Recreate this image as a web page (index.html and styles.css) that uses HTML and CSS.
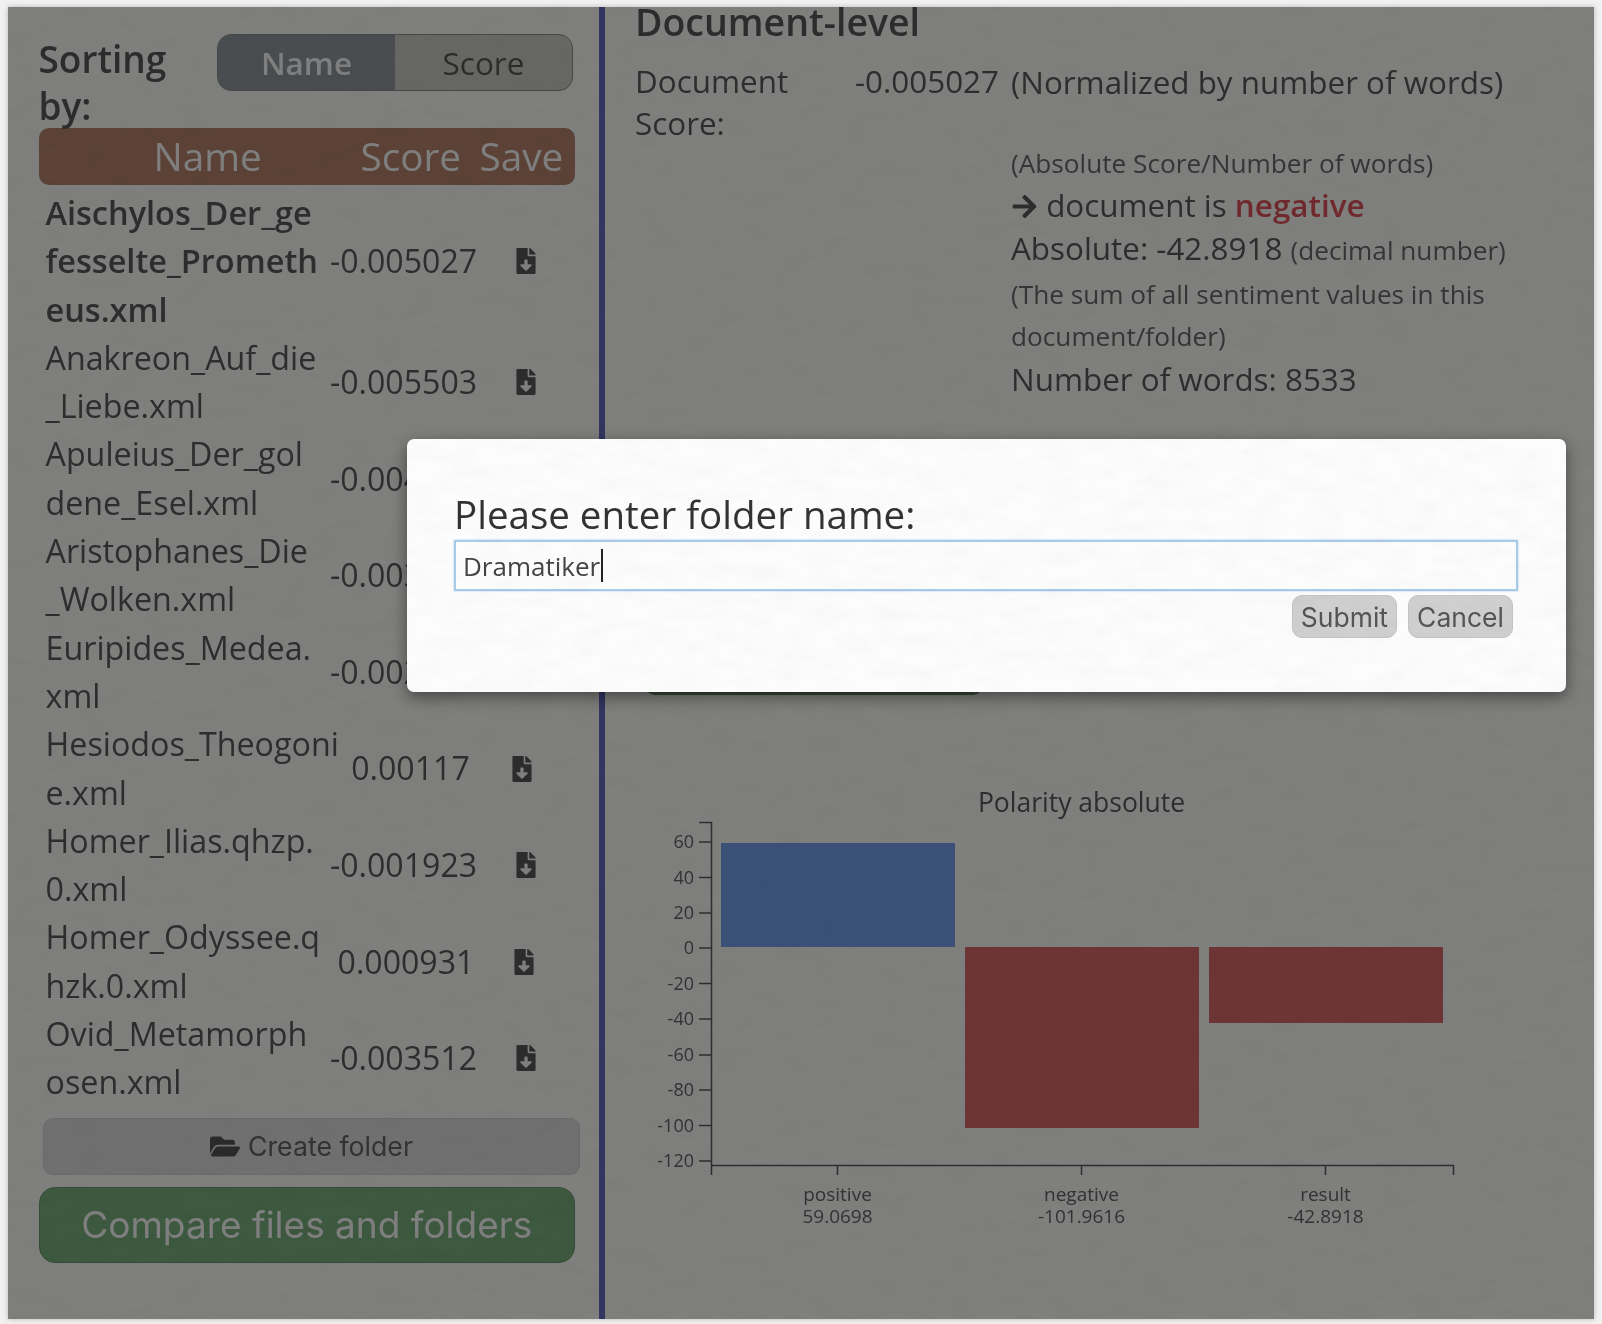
FILE: index.html
```html
<!DOCTYPE html>
<html lang="en">
<head>
<meta charset="utf-8">
<title>Sentiment analysis</title>
<link rel="stylesheet" href="styles.css">
</head>
<body>
<div class="window">
  <div class="app">
    <aside class="sidebar">
      <div class="sorting">
        <div class="sorting-label">Sorting by:</div>
        <div class="toggle">
          <span class="toggle-item toggle-on">Name</span>
          <span class="toggle-item">Score</span>
        </div>
      </div>
      <div class="list-head">
        <span class="head-name">Name</span>
        <span class="head-score">Score</span>
        <span class="head-save">Save</span>
      </div>
      <div class="row row-selected">
        <div class="name">Aischylos_Der_ge<br>fesselte_Prometh<br>eus.xml</div>
        <div class="score">-0.005027</div>
        <div class="save"><svg class="file-icon" viewBox="0 0 384 512"><use href="#file-dl"/></svg></div>
      </div>
      <div class="row">
        <div class="name">Anakreon_Auf_die<br>_Liebe.xml</div>
        <div class="score">-0.005503</div>
        <div class="save"><svg class="file-icon" viewBox="0 0 384 512"><use href="#file-dl"/></svg></div>
      </div>
      <div class="row">
        <div class="name">Apuleius_Der_gol<br>dene_Esel.xml</div>
        <div class="score">-0.004316</div>
        <div class="save"></div>
      </div>
      <div class="row">
        <div class="name">Aristophanes_Die<br>_Wolken.xml</div>
        <div class="score">-0.003875</div>
        <div class="save"></div>
      </div>
      <div class="row">
        <div class="name">Euripides_Medea.<br>xml</div>
        <div class="score">-0.002764</div>
        <div class="save"></div>
      </div>
      <div class="row row-wide">
        <div class="name">Hesiodos_Theogoni<br>e.xml</div>
        <div class="score">0.00117</div>
        <div class="save"><svg class="file-icon" viewBox="0 0 384 512"><use href="#file-dl"/></svg></div>
      </div>
      <div class="row">
        <div class="name">Homer_Ilias.qhzp.<br>0.xml</div>
        <div class="score">-0.001923</div>
        <div class="save"><svg class="file-icon" viewBox="0 0 384 512"><use href="#file-dl"/></svg></div>
      </div>
      <div class="row row-mid">
        <div class="name">Homer_Odyssee.q<br>hzk.0.xml</div>
        <div class="score">0.000931</div>
        <div class="save"><svg class="file-icon" viewBox="0 0 384 512"><use href="#file-dl"/></svg></div>
      </div>
      <div class="row">
        <div class="name">Ovid_Metamorph<br>osen.xml</div>
        <div class="score">-0.003512</div>
        <div class="save"><svg class="file-icon" viewBox="0 0 384 512"><use href="#file-dl"/></svg></div>
      </div>
      <button class="create-folder">
        <svg class="folder-icon" viewBox="0 0 576 512"><path d="M572.694 292.093L500.27 416.248A63.997 63.997 0 0 1 444.989 448H45.025c-18.523 0-30.064-20.093-20.731-36.093l72.424-124.155A64 64 0 0 1 152 256h399.964c18.523 0 30.064 20.093 20.73 36.093zM152 224h328v-48c0-26.51-21.49-48-48-48H272l-64-64H48C21.49 64 0 85.49 0 112v278.046l69.077-118.418C86.214 242.25 117.989 224 152 224z"/></svg>
        Create folder
      </button>
      <button class="compare">Compare files and folders</button>
    </aside>

    <main class="content">
      <h2 class="doc-title">Document-level</h2>
      <div class="score-grid">
        <div class="score-label">Document Score:</div>
        <div class="score-value">-0.005027</div>
        <div class="score-text">
          <div class="line-main">(Normalized by number of words)</div>
          <div class="line-note line-first">(Absolute Score/Number of words)</div>
          <div class="line-main"><svg class="arrow-icon" viewBox="0 0 448 512"><path d="M190.5 66.9l22.2-22.2c9.4-9.4 24.6-9.4 33.9 0L441 239c9.4 9.4 9.4 24.6 0 33.9L246.6 467.3c-9.4 9.4-24.6 9.4-33.9 0l-22.2-22.2c-9.5-9.5-9.3-25 .4-34.3L311.4 296H24c-13.3 0-24-10.7-24-24v-32c0-13.3 10.7-24 24-24h287.4L190.9 101.2c-9.8-9.3-10-24.8-.4-34.3z"/></svg> document is <span class="negative">negative</span></div>
          <div class="line-main">Absolute: -42.8918 <span class="small">(decimal number)</span></div>
          <div class="line-note">(The sum of all sentiment values in this</div>
          <div class="line-note">document/folder)</div>
          <div class="line-main">Number of words: 8533</div>
        </div>
      </div>
      <div class="hidden-action"></div>
      <svg class="chart" viewBox="650 785 810 450" role="img" aria-label="Polarity absolute">
        <text class="chart-title" x="1081.5" y="812">Polarity absolute</text>
        <rect class="bar-pos" x="721" y="843" width="234" height="104"/>
        <rect class="bar-neg" x="965" y="947" width="234" height="181"/>
        <rect class="bar-neg" x="1209" y="947" width="234" height="76"/>
        <path class="axis" d="M699 822.5H711.5V1165.5M699 842H711M699 877.5H711M699 913H711M699 948H711M699 983.5H711M699 1019H711M699 1055H711M699 1090H711M699 1125.5H711M699 1161H711"/>
        <path class="axis" d="M711.5 1175V1165.5H1453.5V1175M837.5 1165.5V1175M1081.5 1165.5V1175M1325.5 1165.5V1175"/>
        <g class="tick-labels">
          <text x="694" y="848">60</text>
          <text x="694" y="883.5">40</text>
          <text x="694" y="919">20</text>
          <text x="694" y="954">0</text>
          <text x="694" y="989.5">-20</text>
          <text x="694" y="1025">-40</text>
          <text x="694" y="1061">-60</text>
          <text x="694" y="1096">-80</text>
          <text x="694" y="1131.5">-100</text>
          <text x="694" y="1167">-120</text>
        </g>
        <g class="cat-labels">
          <text x="837.5" y="1201">positive</text>
          <text x="837.5" y="1223">59.0698</text>
          <text x="1081.5" y="1201">negative</text>
          <text x="1081.5" y="1223">-101.9616</text>
          <text x="1325.5" y="1201">result</text>
          <text x="1325.5" y="1223">-42.8918</text>
        </g>
      </svg>
    </main>
  </div>

  <div class="overlay"></div>

  <div class="modal">
    <div class="modal-title">Please enter folder name:</div>
    <div class="modal-input">Dramatiker<span class="caret"></span></div>
    <div class="modal-actions">
      <button class="modal-btn">Submit</button>
      <button class="modal-btn">Cancel</button>
    </div>
  </div>

  <svg class="paper" aria-hidden="true">
    <filter id="paper-grain" x="0" y="0" width="100%" height="100%">
      <feTurbulence type="fractalNoise" baseFrequency="0.03 0.07" numOctaves="5" seed="7"/>
      <feColorMatrix type="matrix" values="0 0 0 0 0  0 0 0 0 0  0 0 0 0 0  0.9 0 0 0 -0.3"/>
    </filter>
    <rect width="100%" height="100%" filter="url(#paper-grain)"/>
  </svg>
</div>

<svg class="defs" aria-hidden="true">
  <symbol id="file-dl" viewBox="0 0 384 512"><path d="M224 136V0H24C10.7 0 0 10.7 0 24v464c0 13.3 10.7 24 24 24h336c13.3 0 24-10.7 24-24V160H248c-13.2 0-24-10.8-24-24zm76.45 211.36l-96.42 95.7c-6.65 6.61-17.39 6.61-24.04 0l-96.42-95.7C73.42 337.29 80.54 320 94.82 320H160v-80c0-8.84 7.16-16 16-16h32c8.84 0 16 7.16 16 16v80h65.18c14.28 0 21.4 17.29 11.27 27.36zM377 105L279.1 7c-4.5-4.5-10.6-7-17-7H256v128h128v-6.1c0-6.3-2.5-12.4-7-16.9z"/></symbol>
</svg>
</body>
</html>
```
FILE: styles.css
```css
* { box-sizing: border-box; }

html, body {
  margin: 0;
  height: 1324px;
  overflow: hidden;
  background: #f1f1f1;
  font-family: "Open Sans", "DejaVu Sans", sans-serif;
  color: #5c5c5c;
}

.defs { position: absolute; width: 0; height: 0; }

.window {
  position: relative;
  margin: 7px 8px 0;
  width: 1586px;
  height: 1312px;
  overflow: hidden;
  background: #fefefd;
  box-shadow: 0 0 5px rgba(0, 0, 0, .25);
  filter: blur(.45px);
}

.app { display: flex; height: 100%; }

/* sidebar */
.sidebar {
  width: 597px;
  flex: none;
  padding: 28px 24px 0 30.5px;
  border-right: 6px solid #666cc0;
}

.sorting { display: flex; }

.sorting-label {
  width: 178.5px;
  flex: none;
  font-size: 37px;
  font-weight: 600;
  line-height: 47px;
  color: #5a5a5a;
}

.toggle {
  display: flex;
  width: 356px;
  height: 57px;
  margin-top: -1px;
  border: 1px solid #909090;
  border-radius: 14px;
  overflow: hidden;
  background: #cfcfc6;
  font-size: 31.5px;
}

.toggle-item {
  flex: 1;
  display: flex;
  align-items: center;
  justify-content: center;
  color: #5a5a5a;
}

.toggle-on { background: #949a9f; color: #fff; font-weight: 600; }

.list-head {
  display: flex;
  height: 57px;
  margin-top: -1px;
  border-radius: 10px;
  background: #b8846f;
  color: #fff;
  font-size: 38.7px;
  line-height: 57px;
}

.head-name { margin-left: 115px; width: 207px; }
.head-score { width: 119px; }

.row {
  display: grid;
  grid-template-columns: 284px 148px 1fr;
  align-items: center;
  padding-left: 7px;
  font-size: 32.25px;
  line-height: 48.3px;
  white-space: nowrap;
}

.list-head + .row { margin-top: 4px; }

.row-wide { grid-template-columns: 302px 126px 1fr; }
.row-wide .save { padding-right: 5px; }
.row-mid { grid-template-columns: 291px 139px 1fr; }
.row-mid .save { padding-right: 2px; }

.row-selected .name { font-weight: 600; font-size: 32.5px; }

.score { text-align: center; font-size: 32.1px; }

.save { display: flex; justify-content: center; }

.file-icon { width: 20px; height: 26px; fill: #5a5a5a; display: block; }

.create-folder {
  display: flex;
  align-items: center;
  justify-content: center;
  gap: 8px;
  width: 537px;
  height: 57px;
  margin: 11px 0 0 4.5px;
  border: 1px solid #d4d4d4;
  border-radius: 10px;
  background: #e0e0e0;
  color: #666;
  font-family: Inter, "Liberation Sans", sans-serif;
  font-size: 26.7px;
}

.folder-icon { width: 30px; height: 27px; fill: #555; }

.compare {
  display: block;
  width: 536.5px;
  height: 76px;
  margin-top: 12px;
  border: 1px solid #6a9a6e;
  border-radius: 16px;
  background: #7bb27f;
  color: #fff;
  font-family: Inter, "Liberation Sans", sans-serif;
  font-size: 37px;
}

/* main */
.content { flex: 1; padding-left: 30px; min-width: 0; }

.doc-title {
  margin: -1.5px 0 0;
  font-size: 37.5px;
  font-weight: 600;
  line-height: 32px;
  color: #5a5a5a;
}

.score-grid {
  display: grid;
  grid-template-columns: 220px 156px 1fr;
  margin-top: 22px;
  font-size: 31.4px;
  line-height: 42.6px;
}

.score-label { width: 170px; }

.line-main { line-height: 43.4px; }

.line-note { font-size: 26.2px; line-height: 42px; color: #6c6c6c; }

.line-first { margin-top: 41px; line-height: 39px; }

.small { font-size: 26.2px; color: #6c6c6c; }

.negative { color: #e0555c; font-weight: 600; }

.arrow-icon { width: 27px; height: 27px; fill: #5a5a5a; vertical-align: -3px; }

.hidden-action {
  width: 338px;
  height: 60px;
  margin: 235px 0 0 10px;
  border-radius: 10px;
  background: #728f74;
}

.chart {
  display: block;
  width: 810px;
  height: 450px;
  margin: 90px 0 0 15px;
}

.bar-pos { fill: #76a3f0; }
.bar-neg { fill: #dc6a6c; }

.axis { fill: none; stroke: #5e5e5e; stroke-width: 1.5; }

.chart-title {
  fill: #5c5c5c;
  font-size: 26.5px;
  text-anchor: middle;
}

.tick-labels text {
  fill: #666;
  font-size: 18px;
  text-anchor: end;
}

.cat-labels text {
  fill: #666;
  font-size: 19px;
  text-anchor: middle;
}

/* dimmer, dialog, paper grain */
.overlay {
  position: absolute;
  inset: 0;
  background: rgba(0, 0, 0, .5);
}

.modal {
  position: absolute;
  left: 399px;
  top: 432px;
  width: 1159px;
  height: 253px;
  padding: 51px 48px 0 47px;
  border-radius: 7px;
  background: #fdfcfc;
  box-shadow: 0 5px 16px rgba(0, 0, 0, .45);
  color: #333;
}

.modal-title {
  font-size: 38.5px;
  line-height: 48px;
  height: 50px;
}

.modal-input {
  display: flex;
  align-items: center;
  height: 51px;
  padding-left: 7px;
  border: 2px solid #a8cbe8;
  box-shadow: 0 0 2px #a8cbe8;
  font-size: 26px;
  color: #444;
}

.caret {
  width: 2px;
  height: 33px;
  margin-left: 1px;
  background: #222;
}

.modal-actions {
  display: flex;
  justify-content: flex-end;
  gap: 11px;
  margin: 4px 5px 0 0;
}

.modal-btn {
  height: 43px;
  padding: 0 8px;
  min-width: 105px;
  border: 1px solid #c4c4c4;
  border-radius: 10px;
  background: #cfcfcf;
  color: #555;
  font-family: Inter, "Liberation Sans", sans-serif;
  font-size: 26.5px;
}

.paper {
  position: absolute;
  inset: 0;
  width: 100%;
  height: 100%;
  opacity: .035;
  pointer-events: none;
}
```
